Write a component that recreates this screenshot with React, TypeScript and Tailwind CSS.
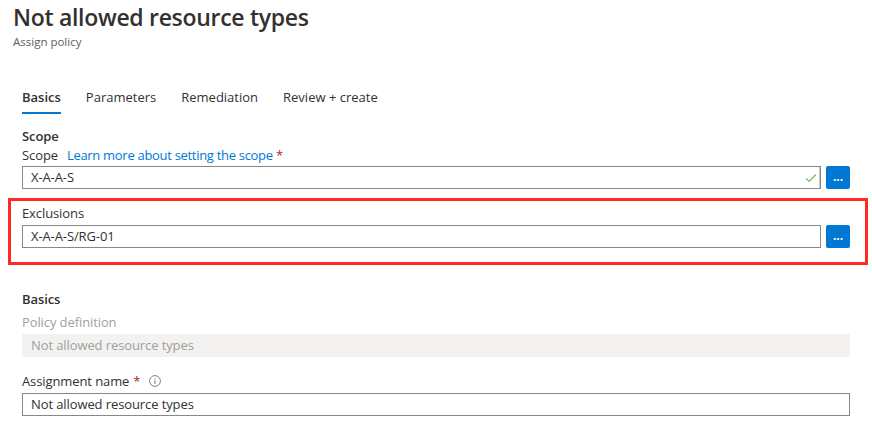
import React from "react";

const font = { fontFamily: '"Open Sans", "Noto Sans", Arial, sans-serif' };

function BrowseButton() {
  return (
    <button
      type="button"
      className="flex h-[23px] w-[24px] shrink-0 items-center justify-center rounded-[2px] bg-[#0078d4] pb-[2px] text-[12px] font-bold leading-none text-white"
    >
      ...
    </button>
  );
}

function Check() {
  return (
    <svg width="12" height="10" viewBox="0 0 12 10" fill="none">
      <path d="M1 5.5 L4.2 8.5 L11 1.5" stroke="#7fba5a" strokeWidth="1.2" />
    </svg>
  );
}

export default function App() {
  return (
    <div className="h-[429px] w-[872px] overflow-hidden bg-white text-[#323130]" style={font}>
      <div className="pl-[13px]">
        <h1 className="pt-[2px] text-[23px] font-semibold leading-[30px] tracking-[-0.3px]">
          Not allowed resource types
        </h1>
        <p className="mt-[2px] text-[11.5px] leading-[16px] text-[#605e5c]">Assign policy</p>
      </div>

      <div className="w-[850px] pl-[22px] text-[13px] tracking-[-0.1px]">
        <div className="mt-[37px] flex gap-[25px] tracking-normal">
          <div className="flex flex-col">
            <span className="pt-[1px] leading-[18px] font-semibold">Basics</span>
            <span className="mt-[6px] h-[2px] bg-[#0078d4]" />
          </div>
          <span className="pt-[1px] leading-[18px]">Parameters</span>
          <span className="pt-[1px] leading-[18px]">Remediation</span>
          <span className="pt-[1px] leading-[18px]">Review + create</span>
        </div>

        <div className="mt-[13px] font-semibold leading-[18px]">Scope</div>
        <div className="mt-[1px] flex gap-[9px] leading-[18px]">
          <span>Scope</span>
          <span>
            <span className="tracking-[-0.3px] text-[#0078d4]">Learn more about setting the scope</span>
            <span className="text-[#a4262c]"> *</span>
          </span>
        </div>
        <div className="mt-[2px] flex gap-[5px]">
          <div className="flex h-[23px] flex-1 items-center border border-[#8a8886]">
            <span className="flex-1 pl-[8px]">X-A-A-S</span>
            <span className="flex h-full w-[15px] items-center justify-center border-r border-[#c8c6c4] pr-[2px]">
              <Check />
            </span>
          </div>
          <BrowseButton />
        </div>

        <div className="mt-[9px] ml-[-14px] mr-[-18px] border-[3px] border-[#ff2a22] pt-[3px] pb-[14px] pl-[11px] pr-[15px]">
          <div className="leading-[18px]">Exclusions</div>
          <div className="mt-[3px] flex gap-[5px]">
            <div className="flex h-[23px] flex-1 items-center border border-[#8a8886] pl-[8px]">
              X-A-A-S/RG-01
            </div>
            <BrowseButton />
          </div>
        </div>

        <div className="mt-[25px] font-semibold leading-[18px]">Basics</div>
        <div className="mt-[5px] leading-[18px] text-[#a19f9d]">Policy definition</div>
        <div className="mt-[3px] flex h-[23px] items-center bg-[#f3f2f1] pl-[9px] text-[#a19f9d]">
          Not allowed resource types
        </div>
        <div className="mt-[15px] flex items-center leading-[18px]">
          <span>Assignment name</span>
          <span className="ml-[4px] text-[#a4262c]">*</span>
          <svg className="ml-[9px]" width="12" height="12" viewBox="0 0 12 12" fill="none">
            <circle cx="6" cy="6" r="5.4" stroke="#605e5c" strokeWidth="0.8" />
            <path d="M6 5.2 V8.8" stroke="#605e5c" strokeWidth="0.9" />
            <circle cx="6" cy="3.6" r="0.55" fill="#605e5c" />
          </svg>
        </div>
        <div className="mt-[3px] flex h-[23px] items-center border border-[#8a8886] pl-[8px]">
          Not allowed resource types
        </div>
      </div>
    </div>
  );
}
